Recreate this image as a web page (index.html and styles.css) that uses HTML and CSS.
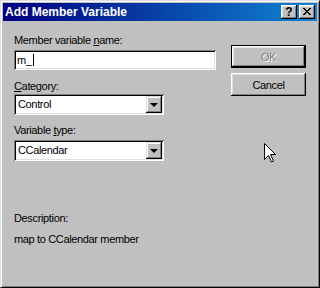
FILE: index.html
```html
<!DOCTYPE html>
<html lang="en">
<head>
    <meta charset="UTF-8">
    <title>Add Member Variable</title>
    <link rel="stylesheet" href="styles.css">
</head>
<body>
    <div class="window">
        <div class="titlebar">
            <span class="title">Add Member Variable</span>
            <div class="title-buttons">
                <button class="tbtn help">?</button>
                <button class="tbtn close">
                    <svg width="8" height="7" viewBox="0 0 8 7" shape-rendering="crispEdges">
                        <path d="M0 0h2v1h-2z M6 0h2v1h-2z M1 1h2v1h-2z M5 1h2v1h-2z M2 2h4v1h-4z M3 3h2v1h-2z M2 4h4v1h-4z M1 5h2v1h-2z M5 5h2v1h-2z M0 6h2v1h-2z M6 6h2v1h-2z" fill="#000"/>
                    </svg>
                </button>
            </div>
        </div>

        <div class="client">
            <!-- left column: fields -->
            <div class="fields">
                <label class="label first">Member variable <u>n</u>ame:</label>
                <div class="edit"><span>m_</span><span class="caret"></span></div>

                <label class="label cat"><u>C</u>ategory:</label>
                <div class="combo">
                    <span class="combo-text">Control</span>
                    <span class="drop"><i class="tri"></i></span>
                </div>

                <label class="label vtype">Variable <u>t</u>ype:</label>
                <div class="combo">
                    <span class="combo-text">CCalendar</span>
                    <span class="drop"><i class="tri"></i></span>
                </div>

                <div class="label desc">Description:</div>
                <div class="label desc-text">map to CCalendar member</div>
            </div>

            <!-- right column: buttons -->
            <div class="actions">
                <button class="btn default" disabled>OK</button>
                <button class="btn">Cancel</button>
            </div>
        </div>
    </div>

    <svg class="cursor" width="12" height="20" viewBox="0 0 12 20">
        <path d="M0.5 0.5 V16.5 L4.5 12.5 L7.5 19 L9.5 18 L6.5 11.5 H11.5 Z" fill="#fff" stroke="#000" stroke-width="1"/>
    </svg>
</body>
</html>
```

FILE: styles.css
```css
/* Win98 style dialog */
body {
    margin: 0;
    font-family: "Liberation Sans", Arial, sans-serif;
    font-size: 11px;
    letter-spacing: -0.35px;
    color: #000;
    background: #c0c0c0;
}

.window {
    width: 320px;
    height: 288px;
    box-sizing: border-box;
    background: #c0c0c0;
    border: 1px solid;
    border-color: #dfdfdf #000 #000 #dfdfdf;
    box-shadow: inset 1px 1px #fff, inset -1px -1px #808080;
    padding: 2px;
}

.titlebar {
    height: 18px;
    display: flex;
    align-items: center;
    justify-content: space-between;
    background: linear-gradient(90deg, #000080 0%, #1084d0 100%);
    padding: 0 2px;
}

.title {
    color: #fff;
    font-weight: bold;
    font-size: 12px;
    letter-spacing: 0;
    line-height: 14px;
}

.title-buttons {
    display: flex;
    gap: 2px;
}

.tbtn {
    width: 16px;
    height: 14px;
    padding: 0;
    margin: 0;
    border: none;
    background: #c0c0c0;
    box-shadow: inset -1px -1px #000, inset 1px 1px #fff, inset -2px -2px #808080, inset 2px 2px #dfdfdf;
    display: flex;
    align-items: center;
    justify-content: center;
    font-family: "Liberation Sans", Arial, sans-serif;
    font-weight: bold;
    font-size: 12px;
    line-height: 12px;
    color: #000;
}

.tbtn.close svg {
    display: block;
    margin-top: -1px;
}

.client {
    display: flex;
    gap: 15px;
    padding: 13px 0 0 11px;
}

.fields {
    width: 202px;
}

.label {
    display: block;
    height: 13px;
    line-height: 13px;
    white-space: nowrap;
}

.cat { margin-top: 10px; }
.vtype { margin-top: 9px; }
.desc { margin-top: 51px; }
.desc-text { margin-top: 8px; }

.edit {
    margin-top: 3px;
    height: 20px;
    box-sizing: border-box;
    background: #fff;
    box-shadow: inset 1px 1px #808080, inset -1px -1px #fff, inset 2px 2px #000, inset -2px -2px #dfdfdf;
    padding: 0 3px;
    display: flex;
    align-items: center;
    line-height: 13px;
}

.caret {
    width: 1px;
    height: 12px;
    background: #000;
    margin-left: 1px;
}

.combo {
    margin-top: 1px;
    width: 150px;
    height: 21px;
    box-sizing: border-box;
    background: #fff;
    box-shadow: inset 1px 1px #808080, inset -1px -1px #fff, inset 2px 2px #000, inset -2px -2px #dfdfdf;
    padding: 2px;
    display: flex;
    align-items: center;
    justify-content: space-between;
}

.vtype + .combo {
    margin-top: 3px;
}

.combo-text {
    padding-left: 2px;
    line-height: 13px;
}

.drop {
    width: 16px;
    height: 17px;
    background: #c0c0c0;
    box-shadow: inset -1px -1px #000, inset 1px 1px #dfdfdf, inset -2px -2px #808080, inset 2px 2px #fff;
    display: flex;
    align-items: center;
    justify-content: center;
}

.tri {
    width: 0;
    height: 0;
    border-left: 4px solid transparent;
    border-right: 4px solid transparent;
    border-top: 4px solid #000;
    margin-left: -1px;
}

.actions {
    display: flex;
    flex-direction: column;
    gap: 5px;
    padding-top: 11px;
}

.btn {
    width: 75px;
    height: 23px;
    margin: 0;
    padding: 0;
    border: none;
    background: #c0c0c0;
    box-shadow: inset -1px -1px #000, inset 1px 1px #fff, inset -2px -2px #808080, inset 2px 2px #dfdfdf;
    font-family: "Liberation Sans", Arial, sans-serif;
    font-size: 11px;
    letter-spacing: -0.35px;
    color: #000;
}

.btn.default {
    border: 1px solid #000;
}

.btn:disabled {
    color: #808080;
    text-shadow: 1px 1px #fff;
}

.cursor {
    position: absolute;
    left: 264px;
    top: 143px;
}
```
